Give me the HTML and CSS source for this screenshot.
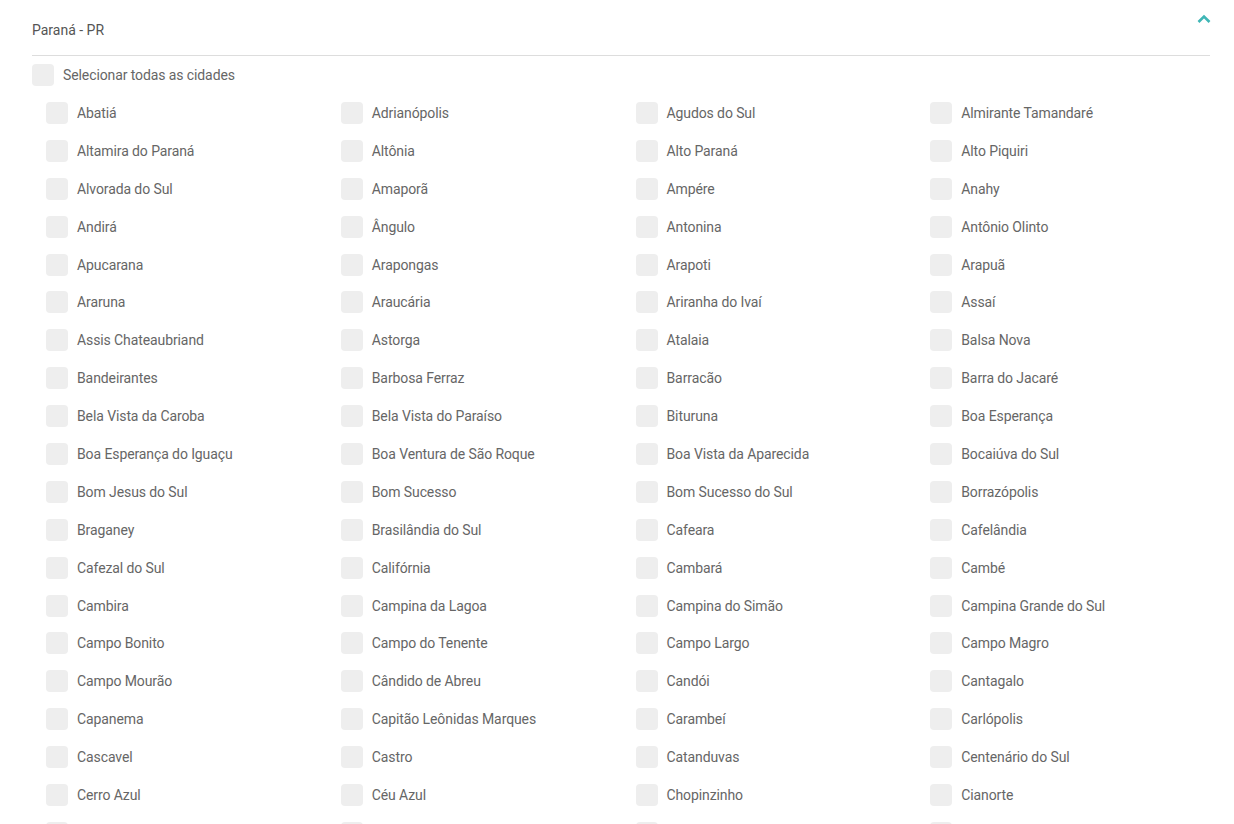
FILE: index.html
```html
<!DOCTYPE html>
<html lang="pt-BR">

<head>
    <meta charset="UTF-8">
    <meta name="viewport" content="width=device-width, initial-scale=1.0">
    <title>Cidades - Paraná</title>
    <link rel="stylesheet" href="styles.css">
</head>

<body>
    <div class="state">
        <div class="state-header">
            <span class="state-title">Paraná - PR</span>
            <svg class="toggle" width="14" height="10" viewBox="0 0 14 10">
                <polyline points="1.5,8 7,2.5 12.5,8" fill="none" stroke="#3fb6b6" stroke-width="2.6" />
            </svg>
        </div>
        <label class="check check-all">
            <span class="box"></span>
            Selecionar todas as cidades
        </label>
        <div class="cities" id="cities"></div>
    </div>
    <script>
        var names = ['Abatiá', 'Adrianópolis', 'Agudos do Sul', 'Almirante Tamandaré',
            'Altamira do Paraná', 'Altônia', 'Alto Paraná', 'Alto Piquiri',
            'Alvorada do Sul', 'Amaporã', 'Ampére', 'Anahy',
            'Andirá', 'Ângulo', 'Antonina', 'Antônio Olinto',
            'Apucarana', 'Arapongas', 'Arapoti', 'Arapuã',
            'Araruna', 'Araucária', 'Ariranha do Ivaí', 'Assaí',
            'Assis Chateaubriand', 'Astorga', 'Atalaia', 'Balsa Nova',
            'Bandeirantes', 'Barbosa Ferraz', 'Barracão', 'Barra do Jacaré',
            'Bela Vista da Caroba', 'Bela Vista do Paraíso', 'Bituruna', 'Boa Esperança',
            'Boa Esperança do Iguaçu', 'Boa Ventura de São Roque', 'Boa Vista da Aparecida', 'Bocaiúva do Sul',
            'Bom Jesus do Sul', 'Bom Sucesso', 'Bom Sucesso do Sul', 'Borrazópolis',
            'Braganey', 'Brasilândia do Sul', 'Cafeara', 'Cafelândia',
            'Cafezal do Sul', 'Califórnia', 'Cambará', 'Cambé',
            'Cambira', 'Campina da Lagoa', 'Campina do Simão', 'Campina Grande do Sul',
            'Campo Bonito', 'Campo do Tenente', 'Campo Largo', 'Campo Magro',
            'Campo Mourão', 'Cândido de Abreu', 'Candói', 'Cantagalo',
            'Capanema', 'Capitão Leônidas Marques', 'Carambeí', 'Carlópolis',
            'Cascavel', 'Castro', 'Catanduvas', 'Centenário do Sul',
            'Cerro Azul', 'Céu Azul', 'Chopinzinho', 'Cianorte',
            'Cidade Gaúcha', 'Clevelândia', 'Colombo', 'Colorado'];
        var list = document.getElementById('cities');
        names.forEach(function (name) {
            var item = document.createElement('label');
            item.className = 'check';
            item.innerHTML = '<span class="box"></span>' + name;
            list.appendChild(item);
        });
    </script>
</body>

</html>
```

FILE: styles.css
```css
* {
    margin: 0;
    padding: 0;
    box-sizing: border-box;
}

body {
    background-color: #fff;
    font-family: Roboto, "Liberation Sans", sans-serif;
    font-size: 14px;
    color: #666;
    overflow: hidden;
}

.state {
    padding: 0 24px 0 32px;
}

.state-header {
    display: flex;
    align-items: center;
    justify-content: space-between;
    height: 56px;
    padding-top: 4px;
    border-bottom: 1px solid #ddd;
}

.state-title {
    font-size: 14px;
    color: #555;
}

.toggle {
    margin-right: -1px;
    margin-bottom: 22px;
}

.check {
    display: flex;
    align-items: center;
    height: 38px;
    cursor: pointer;
    white-space: nowrap;
    letter-spacing: -0.1px;
}

.box {
    flex: none;
    width: 22px;
    height: 22px;
    margin-right: 9px;
    border-radius: 4px;
    background-color: #eeeeee;
}

.cities {
    display: grid;
    grid-template-columns: repeat(4, 1fr);
    grid-auto-rows: 37.9px;
    padding-left: 14px;
    margin-right: -15px;
}

.cities .check {
    height: 37.9px;
}
```
